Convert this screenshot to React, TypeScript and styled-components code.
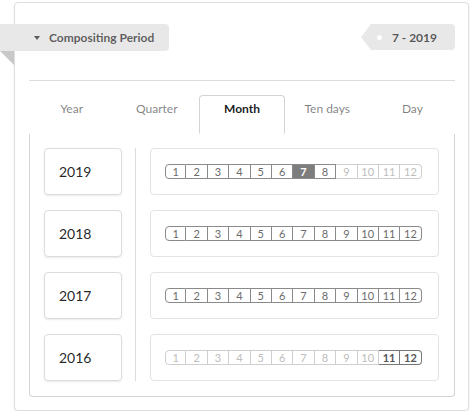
import { useState } from 'react';
import styled, { createGlobalStyle } from 'styled-components';

const GlobalStyle = createGlobalStyle`
    body {
        margin: 0;
        font-family: Lato, 'Helvetica Neue', Arial, sans-serif;
        background: #fff;
    }
`;

const Page = styled.div`
    padding: 2px 4px 0 14px;
`;

const Card = styled.div`
    width: 455px;
    height: 409px;
    box-sizing: border-box;
    border: 1px solid #dededf;
    border-radius: 4px;
    box-shadow: 0 1px 2px rgba(34, 36, 38, 0.12);
    padding: 21px 13px 0 14px;
`;

const Header = styled.div`
    display: flex;
    justify-content: space-between;
    align-items: flex-start;
`;

const Ribbon = styled.div`
    position: relative;
    margin-left: -29px;
    height: 27px;
    width: 169px;
    box-sizing: border-box;
    padding-left: 34px;
    display: flex;
    align-items: center;
    gap: 9px;
    background: #e8e8e8;
    border-radius: 0 4px 4px 0;
    color: rgba(0, 0, 0, 0.62);
    font-size: 12px;
    font-weight: 700;
    &::after {
        content: '';
        position: absolute;
        left: 0;
        top: 100%;
        border-style: solid;
        border-width: 0 14px 14px 0;
        border-color: transparent #c8c8c8 transparent transparent;
    }
`;

const Caret = styled.span`
    width: 0;
    height: 0;
    border-style: solid;
    border-width: 4px 3.5px 0 3.5px;
    border-color: rgba(0, 0, 0, 0.6) transparent transparent transparent;
`;

const Tag = styled.div`
    position: relative;
    height: 26px;
    margin-left: 10px;
    padding: 0 18px 0 21px;
    display: flex;
    align-items: center;
    background: #e8e8e8;
    border-radius: 0 4px 4px 0;
    color: rgba(0, 0, 0, 0.65);
    font-size: 12px;
    font-weight: 700;
    &::before {
        content: '';
        position: absolute;
        left: -10px;
        top: 0;
        border-style: solid;
        border-width: 13px 10px 13px 0;
        border-color: transparent #e8e8e8 transparent transparent;
    }
    &::after {
        content: '';
        position: absolute;
        left: 6px;
        top: 11px;
        width: 5px;
        height: 5px;
        border-radius: 50%;
        background: #fff;
    }
`;

const Divider = styled.div`
    margin-top: 29px;
    border-top: 1px solid #dcdcdc;
`;

const TabBar = styled.div`
    display: grid;
    grid-template-columns: repeat(5, 1fr);
    margin-top: 14px;
    border-bottom: 1px solid #d4d4d5;
`;

type TabProps = {
    readonly active?: boolean
}
const Tab = styled.div<TabProps>`
    height: 39px;
    box-sizing: border-box;
    margin-bottom: -1px;
    padding-top: 5px;
    text-align: center;
    font-size: 12px;
    line-height: 16px;
    cursor: pointer;
    border: 1px solid ${({ active }) => active ? '#d4d4d5' : 'transparent'};
    border-bottom-color: ${({ active }) => active ? '#fff' : 'transparent'};
    border-radius: 4px 4px 0 0;
    background: #fff;
    color: ${({ active }) => active ? 'rgba(0, 0, 0, 0.9)' : 'rgba(0, 0, 0, 0.5)'};
    font-weight: ${({ active }) => active ? 700 : 400};
`;

const TabContent = styled.div`
    height: 263px;
    box-sizing: border-box;
    border: 1px solid #d4d4d5;
    border-top: none;
    border-radius: 0 0 4px 4px;
    padding: 14px 15px 0 14px;
    display: grid;
    grid-template-columns: 78px 1fr;
    align-items: start;
    column-gap: 28px;
`;

const YearColumn = styled.div`
    display: grid;
    grid-auto-rows: 47px;
    row-gap: 15px;
    border-right: 1px solid #dcdcdc;
    margin-right: -14px;
    padding-right: 13px;
`;

const YearButton = styled.div`
    box-sizing: border-box;
    border: 1px solid #dcdcdc;
    border-radius: 4px;
    box-shadow: 0 1px 2px rgba(34, 36, 38, 0.1);
    padding-left: 14px;
    display: flex;
    align-items: center;
    font-size: 14px;
    color: rgba(0, 0, 0, 0.87);
    cursor: pointer;
`;

const MonthColumn = styled.div`
    display: grid;
    grid-auto-rows: 47px;
    row-gap: 15px;
`;

const MonthRow = styled.div`
    box-sizing: border-box;
    border: 1px solid #e3e3e3;
    border-radius: 4px;
    padding-left: 14px;
    display: flex;
    align-items: center;
`;

const MonthGroup = styled.div`
    display: grid;
    grid-template-columns: repeat(12, 21.4px);
    height: 15px;
`;

type CellProps = {
    readonly state: 'on' | 'off' | 'active'
    readonly first?: boolean
    readonly last?: boolean
}
const Cell = styled.div<CellProps>`
    box-sizing: border-box;
    display: flex;
    align-items: center;
    justify-content: center;
    font-size: 11px;
    line-height: 1;
    border: 1px solid ${({ state }) => state === 'off' ? '#cfcfcf' : '#8a8a8a'};
    border-left-width: ${({ first }) => first ? '1px' : '0'};
    border-radius: ${({ first, last }) => first ? '4px 0 0 4px' : last ? '0 4px 4px 0' : '0'};
    background: ${({ state }) => state === 'active' ? '#7d7d7d' : '#fff'};
    color: ${({ state }) => state === 'active' ? '#fff' : state === 'off' ? '#bdbdbd' : '#6b6b6b'};
    font-weight: ${({ state }) => state === 'active' ? 700 : 400};
`;

const BoldCell = styled(Cell)`
    font-weight: 700;
    color: #555;
    border-color: #777;
`;

type YearData = {
    readonly year: number
    readonly from: number
    readonly to: number
    readonly bold?: boolean
}

const years: YearData[] = [
    { year: 2019, from: 1, to: 8 },
    { year: 2018, from: 1, to: 12 },
    { year: 2017, from: 1, to: 12 },
    { year: 2016, from: 11, to: 12, bold: true },
];

const tabs = ['Year', 'Quarter', 'Month', 'Ten days', 'Day'];
const months = Array.from({ length: 12 }, (_, i) => i + 1);

export default function App() {
    const [tab, setTab] = useState('Month');
    const selected = { year: 2019, month: 7 };

    return (
        <Page>
            <GlobalStyle />
            <Card>
                <Header>
                    <Ribbon><Caret />Compositing Period</Ribbon>
                    <Tag>{selected.month} - {selected.year}</Tag>
                </Header>
                <Divider />
                <TabBar>
                    {tabs.map(t => <Tab key={t} active={tab === t} onClick={() => setTab(t)}>{t}</Tab>)}
                </TabBar>
                <TabContent>
                    <YearColumn>
                        {years.map(y => <YearButton key={y.year}>{y.year}</YearButton>)}
                    </YearColumn>
                    <MonthColumn>
                        {years.map(y => (
                            <MonthRow key={y.year}>
                                <MonthGroup>
                                    {months.map(m => {
                                        const on = m >= y.from && m <= y.to;
                                        const active = y.year === selected.year && m === selected.month;
                                        const state = active ? 'active' : on ? 'on' : 'off';
                                        const C = y.bold && on ? BoldCell : Cell;
                                        return <C key={m} state={state} first={m === 1} last={m === 12}>{m}</C>;
                                    })}
                                </MonthGroup>
                            </MonthRow>
                        ))}
                    </MonthColumn>
                </TabContent>
            </Card>
        </Page>
    );
}
